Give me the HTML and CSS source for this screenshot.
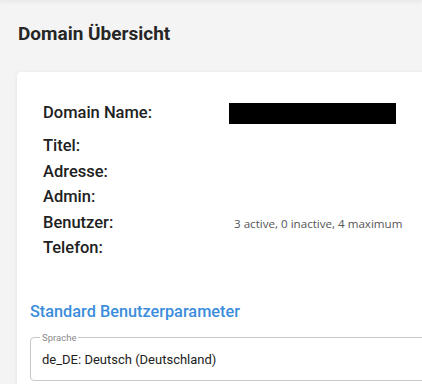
FILE: index.html
```html
<!DOCTYPE html>
<html>
<head>
    <title>Domain Übersicht</title>
    <link rel="stylesheet" href="styles.css">
</head>
<body>
    <div class="topbar"></div>

    <h1 class="page-title">Domain Übersicht</h1>

    <div class="card">
        <div class="info">
            <div class="row first">
                <span class="label">Domain Name:</span>
                <span class="value"><span class="redacted"></span></span>
            </div>
            <div class="row">
                <span class="label">Titel:</span>
                <span class="value"></span>
            </div>
            <div class="row">
                <span class="label">Adresse:</span>
                <span class="value"></span>
            </div>
            <div class="row">
                <span class="label">Admin:</span>
                <span class="value"></span>
            </div>
            <div class="row">
                <span class="label">Benutzer:</span>
                <span class="value small">3 active, 0 inactive, 4 maximum</span>
            </div>
            <div class="row">
                <span class="label">Telefon:</span>
                <span class="value"></span>
            </div>
        </div>

        <h2 class="section-title">Standard Benutzerparameter</h2>

        <fieldset class="field">
            <legend>Sprache</legend>
            <div class="field-value">de_DE: Deutsch (Deutschland)</div>
        </fieldset>
    </div>
</body>
</html>
```

FILE: styles.css
```css
:root {
    --background: #f4f4f4;
    --text: #212121;
    --accent: #3b8ddb;
    --border: #c8c8c8;
}

html {
    height: 100%;
    overflow: hidden;
}

body {
    font-family: Roboto, sans-serif;
    background: var(--background);
    color: var(--text);
    margin: 0;
    height: 100%;
    overflow: hidden;
}

.topbar {
    height: 1px;
    background: #ececec;
    box-shadow: 0 1px 3px rgba(0,0,0,0.12);
}

.page-title {
    font-size: 19px;
    font-weight: 700;
    line-height: 24px;
    margin: 21px 0 0 18px;
    color: #262626;
}

.card {
    background: white;
    margin: 26px -60px 0 17px;
    padding: 28px 13px 40px;
    border-radius: 4px 0 0 0;
    box-shadow: 0 1px 4px rgba(0,0,0,0.08);
}

.info {
    padding-left: 13px;
}

.row {
    display: flex;
    align-items: baseline;
    height: 25.6px;
    line-height: 25.6px;
}

.row.first {
    align-items: center;
    margin-bottom: 7.4px;
}

.label {
    width: 187px;
    font-size: 16.5px;
    font-weight: 500;
}

.value {
    flex: 1;
}

.value.small {
    font-family: 'Open Sans', sans-serif;
    font-size: 11.6px;
    color: #555;
    padding-left: 4px;
}

.redacted {
    display: block;
    width: 167px;
    height: 21px;
    background: #000;
    margin: 1px 0 0 -1px;
}

.section-title {
    font-size: 16.3px;
    font-weight: 500;
    line-height: 20px;
    color: var(--accent);
    margin: 41px 0 0 0;
}

.field {
    border: 1px solid var(--border);
    border-radius: 4px;
    margin: 10px 0 0 0;
    padding: 0 11px 10px;
}

.field legend {
    font-size: 9.5px;
    line-height: 11px;
    color: #8a8a8a;
    padding: 0 2px;
    margin-left: -2px;
}

.field-value {
    font-size: 13px;
    line-height: 20px;
    margin-top: 7px;
}
```
